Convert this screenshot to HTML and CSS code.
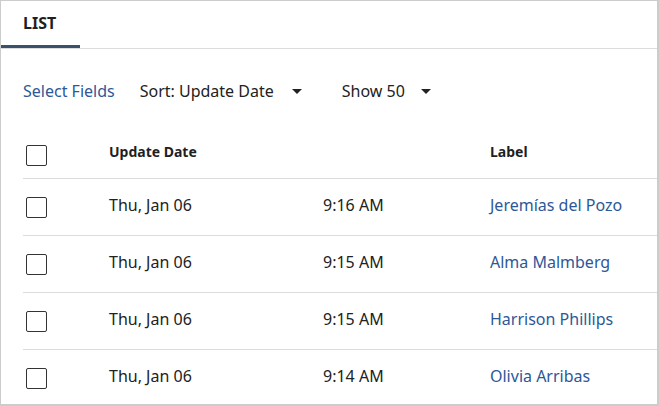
FILE: index.html
```html
<!DOCTYPE html>
<html lang="en">
<head>
<meta charset="utf-8">
<title>List</title>
<link rel="stylesheet" href="styles.css">
</head>
<body>
<div class="frame">
  <div class="tabbar">
    <div class="tab active">LIST</div>
  </div>
  <div class="toolbar">
    <a class="link select-fields">Select Fields</a>
    <div class="dropdown sort">
      <span>Sort: Update Date</span><span class="caret"></span>
    </div>
    <div class="dropdown show">
      <span>Show 50</span><span class="caret"></span>
    </div>
  </div>
  <div class="table">
    <div class="row head">
      <div class="cell check"><span class="checkbox"></span></div>
      <div class="cell htext">Update Date</div>
      <div class="cell htext"></div>
      <div class="cell htext">Label</div>
    </div>
    <div class="row">
      <div class="cell check"><span class="checkbox"></span></div>
      <div class="cell text">Thu, Jan 06</div>
      <div class="cell text">9:16 AM</div>
      <div class="cell text"><a class="link">Jeremías del Pozo</a></div>
    </div>
    <div class="row">
      <div class="cell check"><span class="checkbox"></span></div>
      <div class="cell text">Thu, Jan 06</div>
      <div class="cell text">9:15 AM</div>
      <div class="cell text"><a class="link">Alma Malmberg</a></div>
    </div>
    <div class="row">
      <div class="cell check"><span class="checkbox"></span></div>
      <div class="cell text">Thu, Jan 06</div>
      <div class="cell text">9:15 AM</div>
      <div class="cell text"><a class="link">Harrison Phillips</a></div>
    </div>
    <div class="row">
      <div class="cell check"><span class="checkbox"></span></div>
      <div class="cell text">Thu, Jan 06</div>
      <div class="cell text">9:14 AM</div>
      <div class="cell text"><a class="link">Olivia Arribas</a></div>
    </div>
  </div>
</div>
</body>
</html>
```
FILE: styles.css
```css
html, body {
  margin: 0;
  padding: 0;
  background: #ffffff;
}

body {
  font-family: "Noto Sans", "Open Sans", sans-serif;
  color: #222222;
}

.frame {
  box-sizing: border-box;
  width: 659px;
  height: 406px;
  border-style: solid;
  border-color: #cccccc;
  border-width: 1px 2px 2px 1px;
  overflow: hidden;
}

.tabbar {
  display: flex;
  border-bottom: 1px solid #dcdcdc;
}

.tab {
  height: 44px;
  box-sizing: border-box;
  padding: 11px 24px 0 22px;
  font-size: 16px;
  line-height: 22px;
  font-weight: 700;
  color: #1f1f1f;
}

.tab.active {
  height: 47px;
  border-bottom: 3px solid #3c4f6b;
}

.toolbar {
  display: flex;
  align-items: center;
  padding: 31px 0 0 22px;
  font-size: 16px;
  line-height: 22px;
}

.link {
  color: #2c5898;
  text-decoration: none;
}

.select-fields {
  margin-right: 25px;
}

.dropdown {
  display: flex;
  align-items: center;
  color: #222222;
}

.caret {
  width: 0;
  height: 0;
  margin-left: 18px;
  border-left: 5.5px solid transparent;
  border-right: 5.5px solid transparent;
  border-top: 5.5px solid #222222;
}

.sort {
  margin-right: 40px;
}

.show .caret {
  margin-left: 16px;
}

.table {
  margin-left: 22px;
}

.row {
  display: grid;
  grid-template-columns: 86px 214px 167px 1fr;
  align-items: center;
  height: 57px;
  box-sizing: border-box;
  border-bottom: 1px solid #dcdcdc;
}

.row.head {
  align-items: start;
  height: auto;
  padding: 43px 0 12px;
}

.cell.check {
  padding-left: 3px;
  display: flex;
}

.checkbox {
  display: block;
  box-sizing: border-box;
  width: 21px;
  height: 21px;
  border: 1px solid #333333;
  border-radius: 2px;
  background: #ffffff;
}

.htext {
  font-size: 14px;
  line-height: 19px;
  font-weight: 700;
  margin-top: -3px;
  color: #1f1f1f;
}

.text {
  font-size: 16px;
  line-height: 22px;
  padding-bottom: 4px;
  white-space: nowrap;
}
```
